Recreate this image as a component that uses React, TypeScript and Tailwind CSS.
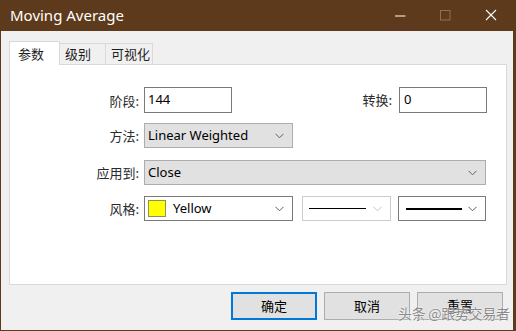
import React from "react";

const ui = { fontFamily: '"Noto Sans", "Noto Sans CJK SC", sans-serif' };
const cjk = { fontFamily: '"Noto Sans CJK SC", "Noto Sans", sans-serif' };

function Chevron({ color = "#5f5f5f" }: { color?: string }) {
  return (
    <svg width="9" height="6" viewBox="0 0 9 6" className="shrink-0">
      <path d="M0.5 0.8 L4.5 4.8 L8.5 0.8" fill="none" stroke={color} strokeWidth="1" />
    </svg>
  );
}

function Label({ text, w }: { text: string; w: string }) {
  return (
    <div className={`${w} shrink-0 text-right text-[13px] text-[#2a2a2a] pr-[5px] leading-none`} style={cjk}>
      {text}
    </div>
  );
}

export default function App() {
  return (
    <div className="w-[516px] h-[331px] bg-[#5c3a1b] flex flex-col overflow-hidden relative" style={ui}>
      {/* title bar */}
      <div className="h-[31px] shrink-0 flex items-center pl-[10px] text-white">
        <span className="text-[15px] leading-none" style={{ fontFamily: '"Noto Sans", sans-serif' }}>Moving Average</span>
      </div>
      <svg className="absolute left-0 top-0" width="516" height="31" viewBox="0 0 516 31">
        <line x1="395" y1="16" x2="405.5" y2="16" stroke="#ffffff" strokeWidth="1" />
        <rect x="440.5" y="10.5" width="9.5" height="9.5" fill="none" stroke="#8c7156" strokeWidth="1" />
        <path d="M486 10 L496 20 M496 10 L486 20" stroke="#ffffff" strokeWidth="1.1" />
      </svg>

      {/* body */}
      <div className="flex-1 ml-[1px] mr-[3px] mb-[1px] bg-[#f0f0f0] flex flex-col pl-[8px] pr-[6px] pt-[10px]">
        {/* tabs */}
        <div className="flex items-end h-[23px] relative z-10">
          <div className="w-[51px] h-[24px] mb-[-1px] bg-white border border-b-0 border-[#d9d9d9] flex items-center pl-[8px] text-[13px] text-[#1e1e1e]" style={cjk}>
            参数
          </div>
          <div className="w-[46px] h-[21px] bg-[#f0f0f0] border border-l-0 border-b-0 border-[#d9d9d9] flex items-center pl-[5px] text-[13px] text-[#1e1e1e]" style={cjk}>
            级别
          </div>
          <div className="w-[47px] h-[21px] bg-[#f0f0f0] border border-l-0 border-b-0 border-[#d9d9d9] flex items-center pl-[5px] text-[13px] text-[#1e1e1e]" style={cjk}>
            可视化
          </div>
        </div>

        {/* panel */}
        <div className="h-[221px] bg-white border border-[#d9d9d9] flex flex-col pt-[22px] pr-[19px]">
          {/* row 1 */}
          <div className="flex items-center h-[26px]">
            <Label text="阶段:" w="w-[134px]" />
            <div className="w-[88px] h-[26px] border border-[#7a7a7a] bg-white flex items-center pl-[3px] text-[13px] text-black">144</div>
            <div className="flex-1 text-right text-[13px] text-[#2a2a2a] pr-[7px]" style={cjk}>转换:</div>
            <div className="w-[88px] h-[26px] border border-[#7a7a7a] bg-white flex items-center pl-[4px] text-[13px] text-black">0</div>
          </div>
          {/* row 2 */}
          <div className="flex items-center h-[25px] mt-[10px]">
            <Label text="方法:" w="w-[134px]" />
            <div className="w-[149px] h-[25px] border border-[#adadad] bg-[#e1e1e1] flex items-center pl-[3px] pr-[8px] text-[13px] text-black">
              <span>Linear Weighted</span>
              <span className="ml-auto"><Chevron /></span>
            </div>
          </div>
          {/* row 3 */}
          <div className="flex items-center h-[25px] mt-[12px]">
            <Label text="应用到:" w="w-[134px]" />
            <div className="flex-1 mr-[1px] h-[25px] border border-[#adadad] bg-[#e1e1e1] flex items-center pl-[3px] pr-[8px] text-[13px] text-black">
              <span>Close</span>
              <span className="ml-auto"><Chevron /></span>
            </div>
          </div>
          {/* row 4 */}
          <div className="flex items-center h-[25px] mt-[11px]">
            <Label text="风格:" w="w-[134px]" />
            <div className="w-[149px] h-[25px] border border-[#7a7a7a] bg-white flex items-center pl-[3px] pr-[8px] text-[13px] text-black">
              <span className="w-[18px] h-[17px] bg-[#ffff00] border border-[#8f8f5a] shrink-0" />
              <span className="ml-[7px]">Yellow</span>
              <span className="ml-auto"><Chevron /></span>
            </div>
            <div className="w-[89px] h-[25px] ml-[9px] border border-[#cccccc] bg-white flex items-center pl-[6px] pr-[8px]">
              <span className="w-[57px] h-[1px] bg-black" />
              <span className="ml-auto"><Chevron color="#c4c4c4" /></span>
            </div>
            <div className="w-[88px] h-[25px] ml-[7px] border border-[#7a7a7a] bg-white flex items-center pl-[7px] pr-[8px]">
              <span className="w-[56px] h-[2px] bg-black" />
              <span className="ml-auto"><Chevron /></span>
            </div>
          </div>
        </div>

        {/* buttons */}
        <div className="flex justify-end gap-[7px] mt-[7px] pr-[4px]">
          <div className="w-[86px] h-[28px] border-2 border-[#0078d7] bg-[#e1e1e1] flex items-center justify-center text-[13px] text-black" style={cjk}>确定</div>
          <div className="w-[86px] h-[28px] border border-[#adadad] bg-[#e1e1e1] flex items-center justify-center text-[13px] text-black" style={cjk}>取消</div>
          <div className="w-[86px] h-[28px] border border-[#adadad] bg-[#e1e1e1] flex items-center justify-center text-[13px] text-black" style={cjk}>重置</div>
        </div>
      </div>

      {/* watermark */}
      <div
        className="absolute left-[398px] top-[306px] text-[14px] leading-none text-[#8a8a8a] whitespace-nowrap tracking-[-0.3px]"
        style={{ ...cjk, textShadow: "0 0 1px #ffffff, 0 0 2px #ffffff" }}
      >
        头条 @跟势交易者
      </div>
    </div>
  );
}
